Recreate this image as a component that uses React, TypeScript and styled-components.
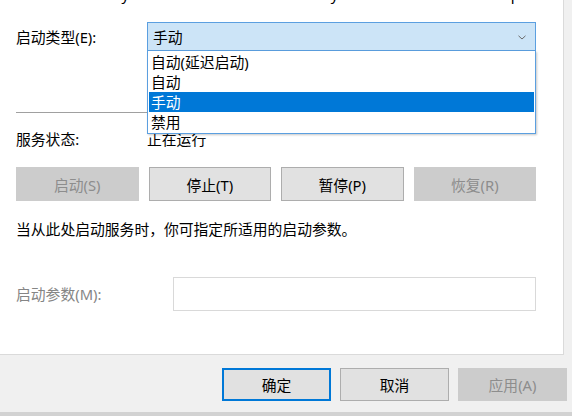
import styled, { createGlobalStyle } from 'styled-components';

const GlobalStyle = createGlobalStyle`
  html, body {
    margin: 0;
    padding: 0;
    background: #f0f0f0;
  }
  body {
    font-family: 'Noto Sans', 'Noto Sans CJK SC', sans-serif;
    font-size: 14.8px;
    color: #000000;
  }
  * {
    box-sizing: border-box;
  }
`;

const Window = styled.div`
  width: 572px;
  height: 416px;
  display: flex;
  flex-direction: column;
  background: #f0f0f0;
  overflow: hidden;
`;

const Body = styled.div`
  display: flex;
  height: 355px;
`;

const Panel = styled.div`
  width: 564px;
  height: 355px;
  padding: 0 27px 0 16px;
  background: #ffffff;
  border-right: 1px solid #dadada;
  border-bottom: 1px solid #dadada;
`;

const ClippedLine = styled.div`
  height: 5px;
  overflow: hidden;
  white-space: nowrap;

  span {
    display: block;
    margin-top: -16px;
    line-height: 20px;
  }
`;

const FieldRow = styled.div<{ $label: number; $top: number; $height: number }>`
  display: grid;
  grid-template-columns: ${(p) => p.$label}px 1fr;
  align-items: center;
  height: ${(p) => p.$height}px;
  margin-top: ${(p) => p.$top}px;
  line-height: 20px;
`;

const Label = styled.span<{ $disabled?: boolean }>`
  color: ${(p) => (p.$disabled ? '#858585' : '#000000')};
`;

const ComboWrap = styled.div`
  position: relative;
  height: 100%;
  z-index: 2;
`;

const Combo = styled.div`
  height: 100%;
  display: flex;
  align-items: center;
  justify-content: space-between;
  padding: 0 9px 0 5px;
  background: #cce4f7;
  border: 1px solid #5b9fe0;
`;

const Chevron = styled.svg`
  width: 8px;
  height: 5px;
  margin-top: 1px;
`;

const DropList = styled.ul`
  position: absolute;
  top: 100%;
  left: 0;
  width: 389px;
  margin: 0;
  padding: 1px 1px;
  list-style: none;
  background: #ffffff;
  border: 1px solid #5b9fe0;
  border-top: none;
  box-shadow: 1px 1px 2px rgba(0, 0, 0, 0.22);
`;

const DropItem = styled.li<{ $active?: boolean }>`
  height: 20px;
  line-height: 20px;
  padding-left: 2px;
  background: ${(p) => (p.$active ? '#0078d7' : 'transparent')};
  color: ${(p) => (p.$active ? '#ffffff' : '#000000')};
`;

const Separator = styled.div`
  height: 1px;
  margin-top: 61px;
  background: #a0a0a0;
`;

const ButtonRow = styled.div`
  display: grid;
  grid-template-columns: repeat(4, 1fr);
  gap: 10px;
  margin-top: 18px;
  height: 34px;
`;

const Button = styled.button<{ $disabled?: boolean; $default?: boolean }>`
  font: inherit;
  height: 100%;
  padding: 0;
  background: ${(p) => (p.$disabled ? '#cccccc' : '#e1e1e1')};
  color: ${(p) => (p.$disabled ? '#8d8d8d' : '#000000')};
  border: 1px solid
    ${(p) => (p.$default ? '#0078d7' : p.$disabled ? '#cccccc' : '#adadad')};
  box-shadow: ${(p) => (p.$default ? 'inset 0 0 0 1px #0078d7' : 'none')};
`;

const Description = styled.div`
  margin-top: 18px;
  line-height: 20px;
`;

const ParamInput = styled.div`
  height: 100%;
  background: #ffffff;
  border: 1px solid #d9d9d9;
`;

const Footer = styled.div`
  height: 57px;
  display: flex;
  justify-content: flex-end;
  gap: 9px;
  padding: 13px 5px 0 0;
`;

const FooterButton = styled(Button)`
  width: 109px;
  height: 33px;
`;

const BottomEdge = styled.div`
  height: 4px;
  background: #d2d2d2;
`;

const options = ['自动(延迟启动)', '自动', '手动', '禁用'];

export default function App() {
  return (
    <Window>
      <GlobalStyle />
      <Body>
        <Panel>
          <ClippedLine>
            <span>C:\WINDOWS\system32\svchost.exe -k LocalSystemNetworkRestricted -p</span>
          </ClippedLine>
          <FieldRow $label={131} $top={17} $height={29}>
            <Label>启动类型(E):</Label>
            <ComboWrap>
              <Combo>
                <span>手动</span>
                <Chevron viewBox="0 0 8 5">
                  <path d="M0.5 0.8 L4 4 L7.5 0.8" fill="none" stroke="#6b6b6b" strokeWidth="1" />
                </Chevron>
              </Combo>
              <DropList>
                {options.map((o) => (
                  <DropItem key={o} $active={o === '手动'}>
                    {o}
                  </DropItem>
                ))}
              </DropList>
            </ComboWrap>
          </FieldRow>
          <Separator />
          <FieldRow $label={131} $top={16} $height={20}>
            <Label>服务状态:</Label>
            <Label>正在运行</Label>
          </FieldRow>
          <ButtonRow>
            <Button $disabled>启动(S)</Button>
            <Button>停止(T)</Button>
            <Button>暂停(P)</Button>
            <Button $disabled>恢复(R)</Button>
          </ButtonRow>
          <Description>当从此处启动服务时，你可指定所适用的启动参数。</Description>
          <FieldRow $label={157} $top={38} $height={34}>
            <Label $disabled>启动参数(M):</Label>
            <ParamInput />
          </FieldRow>
        </Panel>
      </Body>
      <Footer>
        <FooterButton $default>确定</FooterButton>
        <FooterButton>取消</FooterButton>
        <FooterButton $disabled>应用(A)</FooterButton>
      </Footer>
      <BottomEdge />
    </Window>
  );
}
